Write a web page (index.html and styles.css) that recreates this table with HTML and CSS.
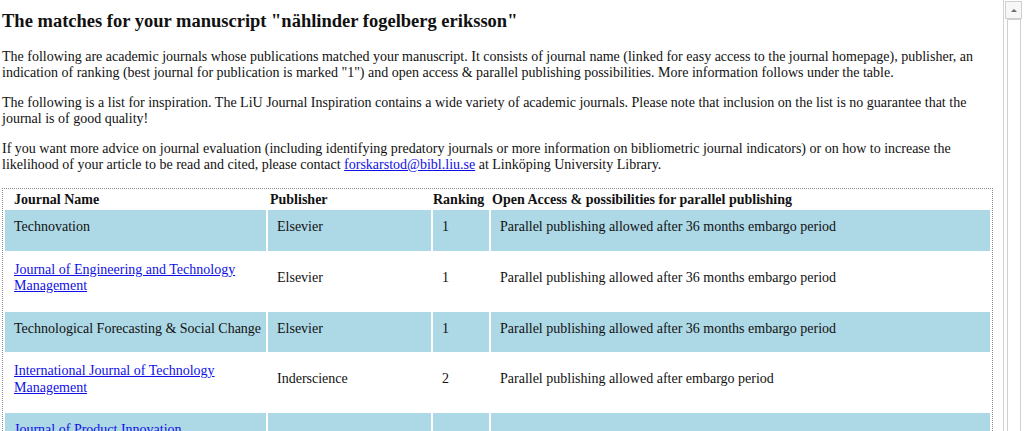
FILE: index.html
```html
<!DOCTYPE html>
<html lang="en">
<head>
<meta charset="utf-8">
<title>Journal matches</title>
<link rel="stylesheet" href="styles.css">
</head>
<body>
<main class="page">
  <h1 class="title">The matches for your manuscript "nählinder fogelberg eriksson"</h1>
  <p class="intro">The following are academic journals whose publications matched your manuscript. It consists of journal name (linked for easy access to the journal homepage), publisher, an indication of ranking (best journal for publication is marked "1") and open access &amp; parallel publishing possibilities. More information follows under the table.</p>
  <p class="intro">The following is a list for inspiration. The LiU Journal Inspiration contains a wide variety of academic journals. Please note that inclusion on the list is no guarantee that the journal is of good quality!</p>
  <p class="intro">If you want more advice on journal evaluation (including identifying predatory journals or more information on bibliometric journal indicators) or on how to increase the likelihood of your article to be read and cited, please contact <a href="#">forskarstod@bibl.liu.se</a> at Linköping University Library.</p>

  <table class="journals">
    <thead>
      <tr>
        <th class="c-name">Journal Name</th>
        <th class="c-pub">Publisher</th>
        <th class="c-rank">Ranking</th>
        <th class="c-oa">Open Access &amp; possibilities for parallel publishing</th>
      </tr>
    </thead>
    <tbody>
      <tr class="odd">
        <td class="name">Technovation</td>
        <td>Elsevier</td>
        <td>1</td>
        <td>Parallel publishing allowed after 36 months embargo period</td>
      </tr>
      <tr>
        <td class="name"><a href="#">Journal of Engineering and Technology Management</a></td>
        <td>Elsevier</td>
        <td>1</td>
        <td>Parallel publishing allowed after 36 months embargo period</td>
      </tr>
      <tr class="odd">
        <td class="name">Technological Forecasting &amp; Social Change</td>
        <td>Elsevier</td>
        <td>1</td>
        <td>Parallel publishing allowed after 36 months embargo period</td>
      </tr>
      <tr>
        <td class="name"><a href="#">International Journal of Technology Management</a></td>
        <td>Inderscience</td>
        <td>2</td>
        <td>Parallel publishing allowed after embargo period</td>
      </tr>
      <tr class="odd">
        <td class="name narrow"><a href="#">Journal of Product Innovation Management</a></td>
        <td>Wiley</td>
        <td>1</td>
        <td>Parallel publishing allowed after 24 months embargo period</td>
      </tr>
    </tbody>
  </table>
</main>

<div class="scrollbar" aria-hidden="true">
  <div class="sb-btn"><span class="sb-arrow"></span></div>
  <div class="sb-thumb"></div>
</div>
</body>
</html>
```
FILE: styles.css
```css
html {
  overflow: hidden;
}
body {
  margin: 0;
  padding: 0 2px;
  background: #fff;
  color: #111;
  font-family: "Liberation Serif", "Times New Roman", serif;
  font-size: 14px;
}
.page {
  width: 1000px;
}
.title {
  margin: 10px 0 17px;
  font-size: 18.5px;
  line-height: 22px;
  font-weight: bold;
}
.intro {
  margin: 15px 0;
  line-height: 15.5px;
}
a {
  color: #1010e6;
}
.journals {
  width: 991px;
  margin-top: 16px;
  table-layout: fixed;
  border: 1px dotted #8a8a8a;
  border-spacing: 2px;
  font-size: 14px;
}
.journals th {
  box-sizing: border-box;
  text-align: left;
  font-weight: bold;
  line-height: 17px;
  padding: 0 1px;
}
.journals .c-name { width: 261px; padding-left: 9px; }
.journals .c-pub { width: 163px; padding-left: 2px; }
.journals .c-rank { width: 56px; padding-left: 0; }
.journals .c-oa { width: 499px; }
.journals td {
  line-height: 16.5px;
  padding: 9px 9px 15px;
  vertical-align: middle;
}
.journals td.name {
  padding-right: 2px;
}
.journals td.narrow {
  padding-right: 30px;
}
.journals tr.odd td {
  background: #add8e6;
}
.scrollbar {
  position: fixed;
  top: 0;
  right: 0;
  bottom: 0;
  width: 20px;
  border-left: 1px solid #d4d4d4;
  background: #fff;
}
.sb-btn {
  position: absolute;
  top: 1px;
  left: 1px;
  right: 2px;
  height: 16px;
  border: 1px solid #cfcfcf;
  background: #f7f7f7;
  display: flex;
  align-items: center;
  justify-content: center;
}
.sb-arrow {
  width: 0;
  height: 0;
  border-left: 3px solid transparent;
  border-right: 3px solid transparent;
  border-bottom: 3px solid #6b6b6b;
}
.sb-thumb {
  position: absolute;
  top: 19px;
  left: 3px;
  right: 3px;
  bottom: -10px;
  border: 1px solid #d0d0d0;
  background: #fff;
}
```
